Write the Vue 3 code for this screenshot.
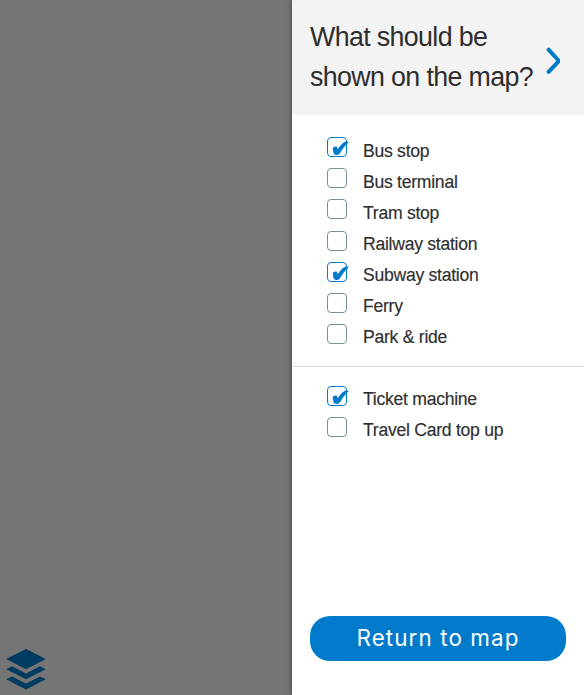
<script setup>
import { reactive } from 'vue'

const groups = reactive([
  [
    { label: 'Bus stop', on: true },
    { label: 'Bus terminal', on: false },
    { label: 'Tram stop', on: false },
    { label: 'Railway station', on: false, low: true },
    { label: 'Subway station', on: true, low: true },
    { label: 'Ferry', on: false, low: true },
    { label: 'Park & ride', on: false, low: true }
  ],
  [
    { label: 'Ticket machine', on: true, low: true },
    { label: 'Travel Card top up', on: false, low: true }
  ]
])
</script>

<template>
  <div class="page">
    <div class="map">
      <svg class="layers" width="40" height="41" viewBox="0 0 40 41">
        <path d="M20 0 39.8 10 20 20.2.2 10Z" />
        <path d="M.2 20.2 6 17.3 20 24.4 34 17.3 39.8 20.2 20 30.3Z" />
        <path d="M.2 30.3 6 27.4 20 34.5 34 27.4 39.8 30.3 20 40.4Z" />
      </svg>
    </div>
    <aside class="panel">
      <header class="head">
        <h1>What should be shown on the map?</h1>
        <svg class="chevron" width="14" height="28" viewBox="0 0 14 28">
          <path d="M2.6 2.7 13 14 2.6 24.8" />
        </svg>
      </header>
      <ul v-for="(group, g) in groups" :key="g" class="group">
        <li v-for="item in group" :key="item.label" class="row" @click="item.on = !item.on">
          <span class="box" :class="{ on: item.on, low: item.low }">
            <svg v-if="item.on" width="17" height="15" viewBox="0 0 17 15">
              <path d="M.7 7.8C.9 5.4 4.9 4.8 5.4 6.8L5.8 8.2C8 5 10.2 2.2 13 .8 14.4.2 16.2.3 16.7 1.2 13 4.4 10.2 8.4 8 12.2 6.8 14.2 3 14.6 1.7 12.8Z" />
            </svg>
          </span>
          <span class="label">{{ item.label }}</span>
        </li>
      </ul>
      <button class="return">Return to map</button>
    </aside>
  </div>
</template>

<style>
body {
  overflow: hidden;
}
</style>

<style scoped>
.page {
  display: flex;
  width: 584px;
  height: 695px;
  background: #757575;
  font-family: "Liberation Sans", Arial, sans-serif;
  color: #2e2e2e;
}
.map {
  width: 292px;
  display: flex;
  align-items: flex-end;
  padding: 0 0 5px 6px;
  box-sizing: border-box;
}
.layers {
  fill: #003b62;
}
.panel {
  display: flex;
  flex-direction: column;
  width: 292px;
  box-sizing: border-box;
  background: #fff;
  box-shadow: 0 0 5px rgba(0, 0, 0, 0.5);
}
.head {
  display: flex;
  align-items: center;
  height: 115px;
  box-sizing: border-box;
  padding: 0 24px 0 18px;
  background: #f3f3f3;
}
h1 {
  width: 236px;
  margin: 0 0 2px;
  font-size: 26.8px;
  font-weight: 400;
  line-height: 40px;
  letter-spacing: -0.64px;
}
.chevron {
  flex: none;
  margin-top: 7px;
  fill: none;
  stroke: #007bcc;
  stroke-width: 4;
  stroke-linecap: round;
  stroke-linejoin: round;
}
.group {
  list-style: none;
  margin: 0;
  padding: 20px 0 14px 35px;
}
.group + .group {
  border-top: 1px solid #d9dbdb;
  padding-top: 16px;
}
.row {
  display: flex;
  height: 31px;
  cursor: pointer;
}
.box {
  flex: none;
  width: 20px;
  height: 20px;
  box-sizing: border-box;
  margin: 2px 16px 0 0;
  border: 1px solid #78909c;
  border-radius: 4px;
}
.box.low {
  margin-top: 3px;
}
.box.on {
  border-color: #007bcc;
}
.box svg {
  display: block;
  margin: 3px 0 0 4px;
  overflow: visible;
  fill: #007bcc;
}
.label {
  font-size: 17.6px;
  line-height: 32px;
  letter-spacing: -0.27px;
  white-space: nowrap;
  -webkit-text-stroke: 0.15px currentColor;
}
.return {
  width: 256px;
  height: 44.5px;
  margin: auto 0 34.5px 18px;
  padding: 0;
  border: 0;
  border-radius: 20px;
  background: #007bcc;
  color: #fff;
  font: 400 22.4px/44px Inter, sans-serif;
  letter-spacing: 1.1px;
}
</style>
